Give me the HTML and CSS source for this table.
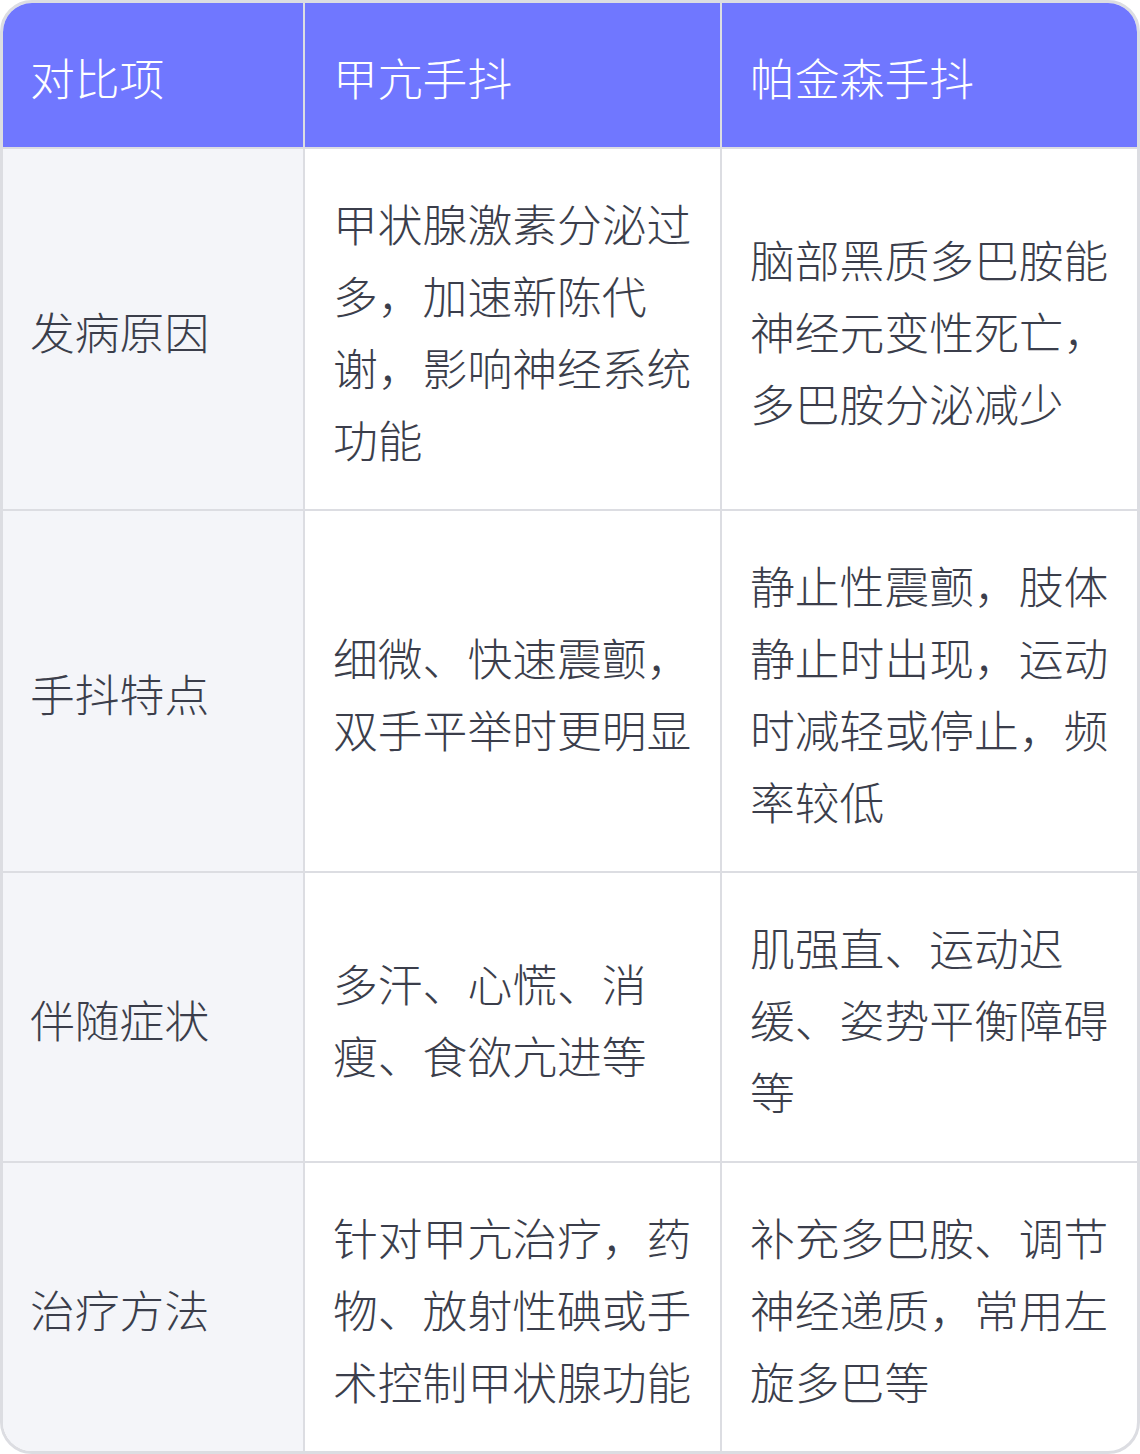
FILE: index.html
```html
<!DOCTYPE html>
<html lang="zh-CN">
<head>
<meta charset="utf-8">
<title>甲亢手抖与帕金森手抖对比</title>
<link rel="stylesheet" href="styles.css">
</head>
<body>
<div class="card">
  <table class="compare">
    <colgroup>
      <col class="c1">
      <col class="c2">
      <col class="c3">
    </colgroup>
    <thead>
      <tr>
        <th>对比项</th>
        <th>甲亢手抖</th>
        <th>帕金森手抖</th>
      </tr>
    </thead>
    <tbody>
      <tr class="tall">
        <td class="label">发病原因</td>
        <td>甲状腺激素分泌过多，加速新陈代谢，影响神经系统功能</td>
        <td>脑部黑质多巴胺能神经元变性死亡，多巴胺分泌减少</td>
      </tr>
      <tr class="tall">
        <td class="label">手抖特点</td>
        <td>细微、快速震颤，双手平举时更明显</td>
        <td>静止性震颤，肢体静止时出现，运动时减轻或停止，频率较低</td>
      </tr>
      <tr class="mid">
        <td class="label">伴随症状</td>
        <td>多汗、心慌、消瘦、食欲亢进等</td>
        <td>肌强直、运动迟缓、姿势平衡障碍等</td>
      </tr>
      <tr class="mid last">
        <td class="label">治疗方法</td>
        <td>针对甲亢治疗，药物、放射性碘或手术控制甲状腺功能</td>
        <td>补充多巴胺、调节神经递质，常用左旋多巴等</td>
      </tr>
    </tbody>
  </table>
</div>
</body>
</html>
```
FILE: styles.css
```css
html, body {
  margin: 0;
  padding: 0;
  background: #ffffff;
}

.card {
  width: 1140px;
  height: 1454px;
  box-sizing: border-box;
  border: 3px solid #dcdde2;
  border-radius: 32px;
  overflow: hidden;
  background: #ffffff;
}

.compare {
  width: 1134px;
  border-collapse: separate;
  border-spacing: 0;
  table-layout: fixed;
  font-family: "Noto Sans CJK SC", "Noto Sans", sans-serif;
  font-size: 44.8px;
  line-height: 72px;
  font-weight: 300;
  color: #3b3e4b;
}

.c1 { width: 302px; }
.c2 { width: 417px; }
.c3 { width: 415px; }

.compare th,
.compare td {
  padding: 38px 28px 34px;
  text-align: left;
  vertical-align: middle;
  border-right: 2px solid #dcdde2;
  border-bottom: 2px solid #dcdde2;
  font-weight: 300;
  word-break: break-all;
}

.compare th:first-child,
.compare td:first-child {
  padding-left: 27px;
}

.compare th:last-child,
.compare td:last-child {
  border-right: none;
}

.compare th {
  background: #7077ff;
  color: #ffffff;
  height: 72px;
}

.compare .label {
  background: #f4f5f9;
}

.compare tr.last td {
  border-bottom: none;
}
```
